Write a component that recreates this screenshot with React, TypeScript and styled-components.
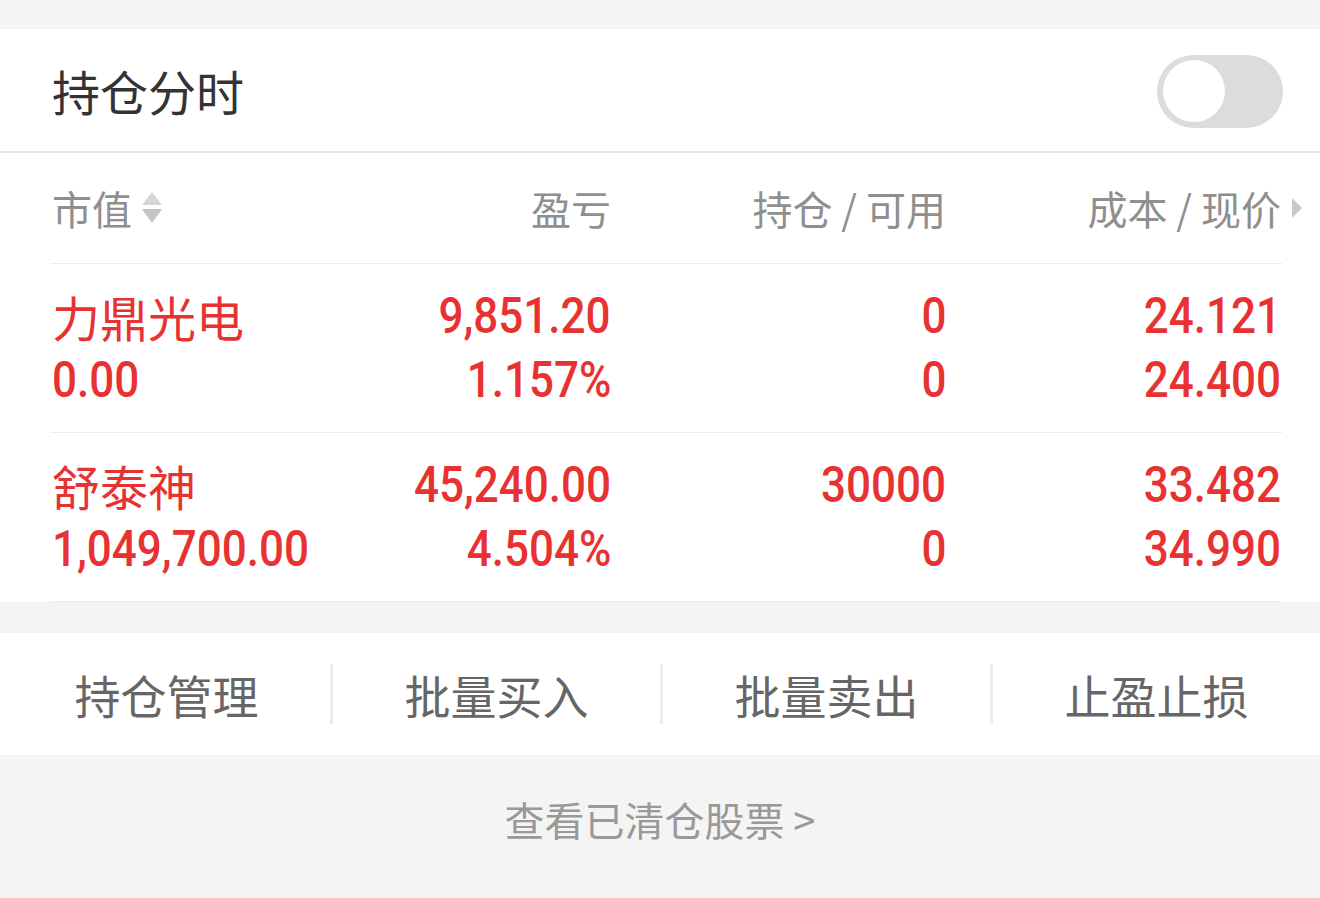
import React from 'react';
import styled, { createGlobalStyle } from 'styled-components';

const GlobalStyle = createGlobalStyle`
  html, body {
    margin: 0;
    padding: 0;
    background: #f4f4f4;
  }
  body {
    font-family: "Noto Sans CJK SC", "Noto Sans", sans-serif;
  }
`;

const RED = '#e83232';

const Page = styled.div`
  width: 1320px;
  padding-top: 29px;
`;

const Card = styled.section`
  background: #fff;
`;

const TitleBar = styled.div`
  height: 122px;
  display: flex;
  align-items: center;
  justify-content: space-between;
  padding: 0 37px 0 52px;
  border-bottom: 2px solid #e8e8e8;
`;

const Title = styled.h2`
  margin: 0;
  font-size: 48px;
  font-weight: 400;
  color: #333;
`;

const Toggle = styled.div<{ $on?: boolean }>`
  width: 126px;
  height: 73px;
  margin-top: 2px;
  border-radius: 37px;
  background: ${(p) => (p.$on ? RED : '#dcdcdc')};
  display: flex;
  align-items: center;
  padding: 0 6px;
  box-sizing: border-box;
  justify-content: ${(p) => (p.$on ? 'flex-end' : 'flex-start')};
`;

const Knob = styled.span`
  width: 62px;
  height: 62px;
  border-radius: 50%;
  background: #fff;
`;

const Table = styled.div`
  padding: 0 38px 0 50px;
`;

const Row = styled.div<{ $head?: boolean }>`
  display: grid;
  grid-template-columns: 300px 259px 335px 335px;
  padding: ${(p) => (p.$head ? '0 1px 0 2px' : '20px 1px 20px 2px')};
  height: ${(p) => (p.$head ? '110px' : 'auto')};
  align-items: center;
  border-bottom: 1px solid #ececec;
`;

const HeadCell = styled.div<{ $left?: boolean }>`
  position: relative;
  display: flex;
  align-items: center;
  justify-content: ${(p) => (p.$left ? 'flex-start' : 'flex-end')};
  font-size: 40px;
  color: #8f8f8f;
  line-height: 1;
`;

const NextArrow = styled.span`
  position: absolute;
  right: -21px;
  top: 50%;
  margin-top: -10px;
  width: 0;
  height: 0;
  border-top: 10px solid transparent;
  border-bottom: 10px solid transparent;
  border-left: 10px solid #c8c8c8;
`;

const Cell = styled.div<{ $left?: boolean }>`
  display: flex;
  flex-direction: column;
  align-items: ${(p) => (p.$left ? 'flex-start' : 'flex-end')};
  color: ${RED};
`;

const Name = styled.span`
  font-size: 48px;
  line-height: 64px;
  height: 64px;
`;

const Num = styled.span<{ $left?: boolean }>`
  display: inline-block;
  font-family: "Roboto", "Noto Sans", sans-serif;
  font-weight: 500;
  font-size: 50px;
  line-height: 64px;
  height: 64px;
  white-space: nowrap;
  transform: scaleX(0.88);
  transform-origin: ${(p) => (p.$left ? 'left' : 'right')} center;
`;

const Gap = styled.div`
  height: 31px;
`;

const ActionBar = styled.nav`
  height: 122px;
  background: #fff;
  display: flex;
  align-items: center;
`;

const Action = styled.button<{ $divider?: boolean }>`
  flex: 1;
  height: 60px;
  border: none;
  background: none;
  padding: 0;
  font-family: inherit;
  font-size: 46px;
  color: #666;
  border-left: ${(p) => (p.$divider ? '3px solid #ececec' : '3px solid transparent')};
  display: flex;
  align-items: center;
  justify-content: center;
`;

const Footer = styled.div`
  height: 142px;
  box-sizing: border-box;
  padding-top: 44px;
  text-align: center;
  font-size: 40px;
  line-height: 40px;
  color: #999;
`;

function SortIcon() {
  return (
    <svg width="24" height="40" viewBox="0 0 24 40" style={{ marginLeft: 8 }}>
      <path d="M12 4 L22 17 L2 17 Z" fill="#d6d6d6" />
      <path d="M2 21 L22 21 L12 35 Z" fill="#c4c4c4" />
    </svg>
  );
}

const positions = [
  { name: '力鼎光电', value: '0.00', pl: '9,851.20', rate: '1.157%', hold: '0', avail: '0', cost: '24.121', price: '24.400' },
  { name: '舒泰神', value: '1,049,700.00', pl: '45,240.00', rate: '4.504%', hold: '30000', avail: '0', cost: '33.482', price: '34.990' },
];

const actions = ['持仓管理', '批量买入', '批量卖出', '止盈止损'];

export default function App() {
  return (
    <Page>
      <GlobalStyle />
      <Card>
        <TitleBar>
          <Title>持仓分时</Title>
          <Toggle>
            <Knob />
          </Toggle>
        </TitleBar>
        <Table>
          <Row $head>
            <HeadCell $left>
              市值
              <SortIcon />
            </HeadCell>
            <HeadCell>盈亏</HeadCell>
            <HeadCell>持仓 / 可用</HeadCell>
            <HeadCell>
              成本 / 现价
              <NextArrow />
            </HeadCell>
          </Row>
          {positions.map((p) => (
            <Row key={p.name}>
              <Cell $left>
                <Name>{p.name}</Name>
                <Num $left>{p.value}</Num>
              </Cell>
              <Cell>
                <Num>{p.pl}</Num>
                <Num>{p.rate}</Num>
              </Cell>
              <Cell>
                <Num>{p.hold}</Num>
                <Num>{p.avail}</Num>
              </Cell>
              <Cell>
                <Num>{p.cost}</Num>
                <Num>{p.price}</Num>
              </Cell>
            </Row>
          ))}
        </Table>
      </Card>
      <Gap />
      <ActionBar>
        {actions.map((a, i) => (
          <Action key={a} $divider={i > 0}>
            {a}
          </Action>
        ))}
      </ActionBar>
      <Footer>查看已清仓股票 &gt;</Footer>
    </Page>
  );
}
